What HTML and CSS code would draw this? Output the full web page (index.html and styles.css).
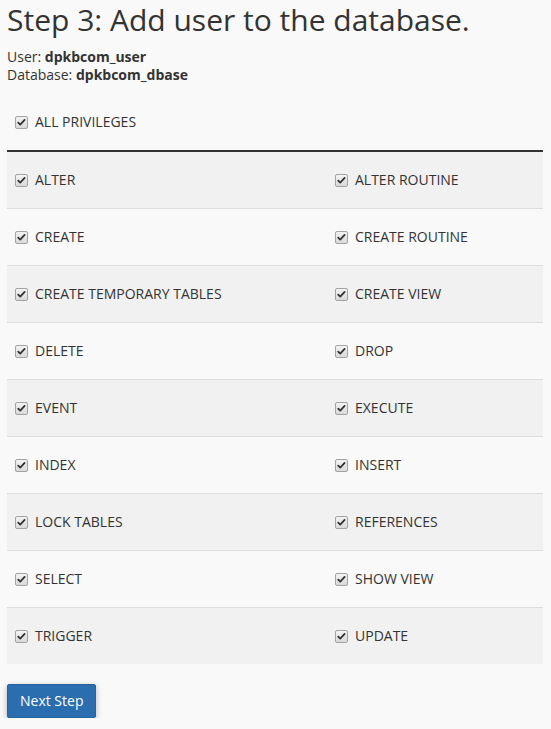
FILE: index.html
```html
<!DOCTYPE html>
<html lang="en">
<head>
<meta charset="utf-8">
<title>Add user to the database</title>
<link rel="stylesheet" href="styles.css">
</head>
<body>
<div class="page">
  <h1 class="title">Step 3: Add user to the database.</h1>
  <div class="info">
    <div>User: <strong>dpkbcom_user</strong></div>
    <div>Database: <strong>dpkbcom_dbase</strong></div>
  </div>
  <div class="all-row">
    <label class="priv"><input type="checkbox" checked> ALL PRIVILEGES</label>
  </div>
  <table class="privs">
    <tbody>
      <tr><td><label class="priv"><input type="checkbox" checked> ALTER</label></td><td><label class="priv"><input type="checkbox" checked> ALTER ROUTINE</label></td></tr>
      <tr><td><label class="priv"><input type="checkbox" checked> CREATE</label></td><td><label class="priv"><input type="checkbox" checked> CREATE ROUTINE</label></td></tr>
      <tr><td><label class="priv"><input type="checkbox" checked> CREATE TEMPORARY TABLES</label></td><td><label class="priv"><input type="checkbox" checked> CREATE VIEW</label></td></tr>
      <tr><td><label class="priv"><input type="checkbox" checked> DELETE</label></td><td><label class="priv"><input type="checkbox" checked> DROP</label></td></tr>
      <tr><td><label class="priv"><input type="checkbox" checked> EVENT</label></td><td><label class="priv"><input type="checkbox" checked> EXECUTE</label></td></tr>
      <tr><td><label class="priv"><input type="checkbox" checked> INDEX</label></td><td><label class="priv"><input type="checkbox" checked> INSERT</label></td></tr>
      <tr><td><label class="priv"><input type="checkbox" checked> LOCK TABLES</label></td><td><label class="priv"><input type="checkbox" checked> REFERENCES</label></td></tr>
      <tr><td><label class="priv"><input type="checkbox" checked> SELECT</label></td><td><label class="priv"><input type="checkbox" checked> SHOW VIEW</label></td></tr>
      <tr><td><label class="priv"><input type="checkbox" checked> TRIGGER</label></td><td><label class="priv"><input type="checkbox" checked> UPDATE</label></td></tr>
    </tbody>
  </table>
  <div class="actions">
    <button class="btn-primary" type="button">Next Step</button>
  </div>
</div>
</body>
</html>
```

FILE: styles.css
```css
html, body {
  margin: 0;
  padding: 0;
  background: #f9f9f9;
}
body {
  font-family: "Open Sans", "Liberation Sans", sans-serif;
  font-size: 14px;
  color: #333;
}
.page {
  padding: 3px 8px 0 7px;
}
.title {
  margin: 0;
  font-size: 30px;
  font-weight: 400;
  line-height: 33px;
  color: #333;
}
.info {
  margin-top: 12px;
  line-height: 18px;
}
.info strong {
  font-weight: 700;
}
.all-row {
  margin-top: 10px;
  padding: 18px 8px;
  line-height: 20px;
}
.priv {
  display: flex;
  align-items: center;
  gap: 7px;
  line-height: 20px;
  color: #333;
}
.priv input {
  -webkit-appearance: none;
  appearance: none;
  margin: 0;
  width: 13px;
  height: 13px;
  border: 1px solid #a3a3a3;
  border-radius: 2px;
  background-color: #e6e6e6;
  background-image: url("data:image/svg+xml,%3Csvg xmlns='http://www.w3.org/2000/svg' viewBox='0 0 13 13'%3E%3Cpath d='M2.6 6.6 L5 9 L10.2 3.4' fill='none' stroke='%23333' stroke-width='2.1' stroke-linecap='round' stroke-linejoin='round'/%3E%3C/svg%3E"), linear-gradient(#f3f3f3, #d9d9d9);
  background-size: 11px 11px, 100% 100%;
  background-repeat: no-repeat;
  background-position: center;
  flex: none;
}
.privs {
  width: 100%;
  border-collapse: collapse;
  border-top: 2px solid #333;
}
.privs td {
  padding: 18px 8px;
  border-top: 1px solid #dddddd;
  vertical-align: middle;
}
.privs tr:first-child td {
  border-top: none;
}
.privs td:first-child {
  width: 304px;
}
.privs tr:nth-child(odd) td {
  background: #f1f1f1;
}
.privs tr:nth-child(even) td {
  background: #f9f9f9;
}
.actions {
  margin-top: 20px;
}
.btn-primary {
  font-family: "Open Sans", "Liberation Sans", sans-serif;
  font-size: 14px;
  line-height: 20px;
  color: #fff;
  background: #2b6eaf;
  border: 1px solid #26639e;
  border-radius: 2px;
  padding: 6px 12px;
  box-shadow: 0 2px 6px rgba(0, 0, 0, 0.28);
  cursor: pointer;
}
```
